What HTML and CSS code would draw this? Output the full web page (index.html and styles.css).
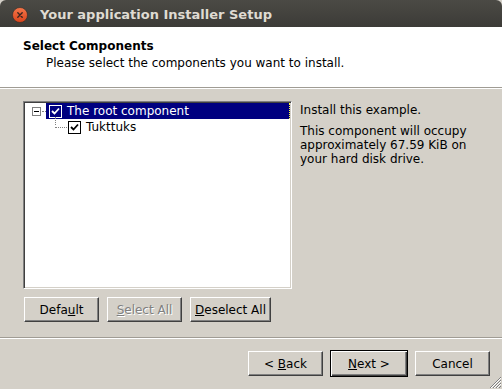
FILE: index.html
```html
<!DOCTYPE html>
<html lang="en">
<head>
    <meta charset="UTF-8">
    <title>Your application Installer Setup</title>
    <link rel="stylesheet" href="styles.css">
</head>
<body>
    <div class="window">
        <div class="titlebar">
            <span class="close-btn">
                <svg width="16" height="16" viewBox="0 0 16 16">
                    <defs>
                        <linearGradient id="cg" x1="0" y1="0" x2="0" y2="1">
                            <stop offset="0" stop-color="#f5774a"/>
                            <stop offset="1" stop-color="#d9431b"/>
                        </linearGradient>
                    </defs>
                    <circle cx="8" cy="8" r="7.5" fill="url(#cg)" stroke="#2c2b28" stroke-width="0.6"/>
                    <path d="M5.8 5.8 L10.2 10.2 M10.2 5.8 L5.8 10.2" stroke="#3a2520" stroke-width="1.4" stroke-linecap="round"/>
                </svg>
            </span>
            <span class="title">Your application Installer Setup</span>
        </div>

        <div class="header">
            <div class="header-title">Select Components</div>
            <div class="header-sub">Please select the components you want to install.</div>
        </div>

        <div class="content">
            <div class="main-row">
                <div class="tree">
                    <div class="tree-row root">
                        <span class="expander"></span>
                        <span class="hline"></span>
                        <span class="selected">
                            <span class="check check-inv">
                                <svg width="9" height="9" viewBox="0 0 9 9"><path d="M1 4 L3.5 6.5 L8 1.5" fill="none" stroke="#fff" stroke-width="1.8"/></svg>
                            </span>
                            <span class="label">The root component</span>
                        </span>
                    </div>
                    <div class="tree-row child">
                        <span class="vline"></span>
                        <span class="hline2"></span>
                        <span class="check">
                            <svg width="9" height="9" viewBox="0 0 9 9"><path d="M1 4 L3.5 6.5 L8 1.5" fill="none" stroke="#000" stroke-width="1.8"/></svg>
                        </span>
                        <span class="label">Tukttuks</span>
                    </div>
                </div>
                <div class="info">
                    <p>Install this example.</p>
                    <p>This component will occupy approximately 67.59 KiB on your hard disk drive.</p>
                </div>
            </div>
            <div class="tree-buttons">
                <button class="btn">Defa<u>u</u>lt</button>
                <button class="btn disabled"><u>S</u>elect All</button>
                <button class="btn wide"><u>D</u>eselect All</button>
            </div>
        </div>

        <div class="footer">
            <button class="btn">&lt; <u>B</u>ack</button>
            <button class="btn default"><u>N</u>ext &gt;</button>
            <button class="btn">Cancel</button>
            <svg class="grip" width="14" height="14" viewBox="0 0 14 14">
                <path d="M13 2 L2 13 M13 5 L5 13 M13 8 L8 13 M13 11 L11 13" stroke="#808080" stroke-width="1"/>
                <path d="M13 3 L3 13 M13 6 L6 13 M13 9 L9 13" stroke="#fff" stroke-width="1"/>
            </svg>
        </div>
    </div>
</body>
</html>
```

FILE: styles.css
```css
body {
    margin: 0;
    padding: 0;
    background: #d4d0c8;
    font-family: "DejaVu Sans", sans-serif;
    font-size: 12px;
    color: #000;
}
.window {
    width: 502px;
    height: 389px;
    display: flex;
    flex-direction: column;
    background: #d4d0c8;
    overflow: hidden;
}
.titlebar {
    height: 27px;
    background: linear-gradient(#4b4a45, #3c3b37);
    border-radius: 6px 6px 0 0;
    display: flex;
    align-items: center;
    padding-left: 12px;
    flex-shrink: 0;
}
.close-btn {
    display: flex;
    width: 16px;
    height: 16px;
    margin-top: 2px;
}
.title {
    margin-left: 12px;
    color: #dfdbd2;
    font-weight: bold;
    font-size: 13px;
    margin-top: 1px;
}
.header {
    background: #fff;
    height: 61px;
    box-sizing: border-box;
    padding: 12px 0 0 23px;
    border-bottom: 1px solid #a09c94;
    box-shadow: 0 1px 0 #fff;
    flex-shrink: 0;
}
.header-title {
    font-weight: bold;
    font-size: 12px;
    line-height: 15px;
}
.header-sub {
    margin-left: 23px;
    margin-top: 1px;
    line-height: 16px;
}
.content {
    padding: 13px 0 0 23px;
    flex: 1;
    border-bottom: 1px solid #a09c94;
    box-shadow: 0 1px 0 #fff;
}
.main-row {
    display: flex;
}
.tree {
    width: 269px;
    height: 188px;
    box-sizing: border-box;
    background: #fff;
    border-style: solid;
    border-width: 1px;
    border-color: #808080 #fff #fff #808080;
    box-shadow: inset 1px 1px 0 #404040, inset -1px -1px 0 #d4d0c8;
    padding: 1px 1px 0 8px;
}
.tree-row {
    display: flex;
    align-items: center;
    height: 16px;
}
.expander {
    width: 7px;
    height: 7px;
    border: 1px solid #808080;
    position: relative;
    flex-shrink: 0;
}
.expander::after {
    content: "";
    position: absolute;
    left: 1px;
    top: 3px;
    width: 5px;
    height: 1px;
    background: #000;
}
.hline {
    width: 4px;
    margin-left: 1px;
    border-top: 1px dotted #808080;
}
.selected {
    flex: 1;
    display: flex;
    align-items: center;
    height: 16px;
    background: #000080;
    color: #fff;
    padding-left: 3px;
    box-sizing: border-box;
    border-right: 1px dotted #ffff40;
}
.check {
    width: 11px;
    height: 11px;
    border: 1px solid #000;
    background: #fff;
    display: flex;
    align-items: center;
    justify-content: center;
    flex-shrink: 0;
}
.check-inv {
    border-color: #fff;
    background: #000080;
}
.label {
    margin-left: 5px;
    font-size: 12px;
}
.child {
    height: 16px;
    padding-left: 23px;
    position: relative;
}
.vline {
    position: absolute;
    left: 23px;
    top: -2px;
    height: 8px;
    border-left: 1px dotted #808080;
}
.hline2 {
    width: 12px;
    border-top: 1px dotted #808080;
}
.child .check {
    margin-left: 1px;
}
.info {
    margin-left: 8px;
    padding-top: 2px;
    line-height: 14px;
}
.info p {
    margin: 0 0 7px 0;
    width: 175px;
}
.tree-buttons {
    display: flex;
    gap: 8px;
    margin-top: 8px;
    padding-left: 1px;
}
.btn {
    font-family: "DejaVu Sans", sans-serif;
    font-size: 12px;
    background: #d4d0c8;
    color: #000;
    width: 75px;
    height: 25px;
    padding: 0;
    border-style: solid;
    border-width: 1px;
    border-color: #fff #404040 #404040 #fff;
    box-shadow: inset -1px -1px 0 #808080;
}
.btn.wide {
    width: 81px;
}
.btn.disabled {
    color: #808080;
    text-shadow: 1px 1px 0 #fff;
}
.btn.default {
    border: 1px solid #000;
    box-shadow: inset 1px 1px 0 #fff, inset -1px -1px 0 #404040, inset -2px -2px 0 #808080;
}
.footer {
    height: 51px;
    display: flex;
    align-items: flex-start;
    padding: 13px 0 0 248px;
    box-sizing: border-box;
    gap: 7px;
    position: relative;
    flex-shrink: 0;
}
.footer .btn {
    width: 75px;
}
.footer .btn.default {
    width: 78px;
    margin-top: -1px;
    height: 27px;
}
.grip {
    position: absolute;
    right: 0;
    bottom: 0;
}
```
